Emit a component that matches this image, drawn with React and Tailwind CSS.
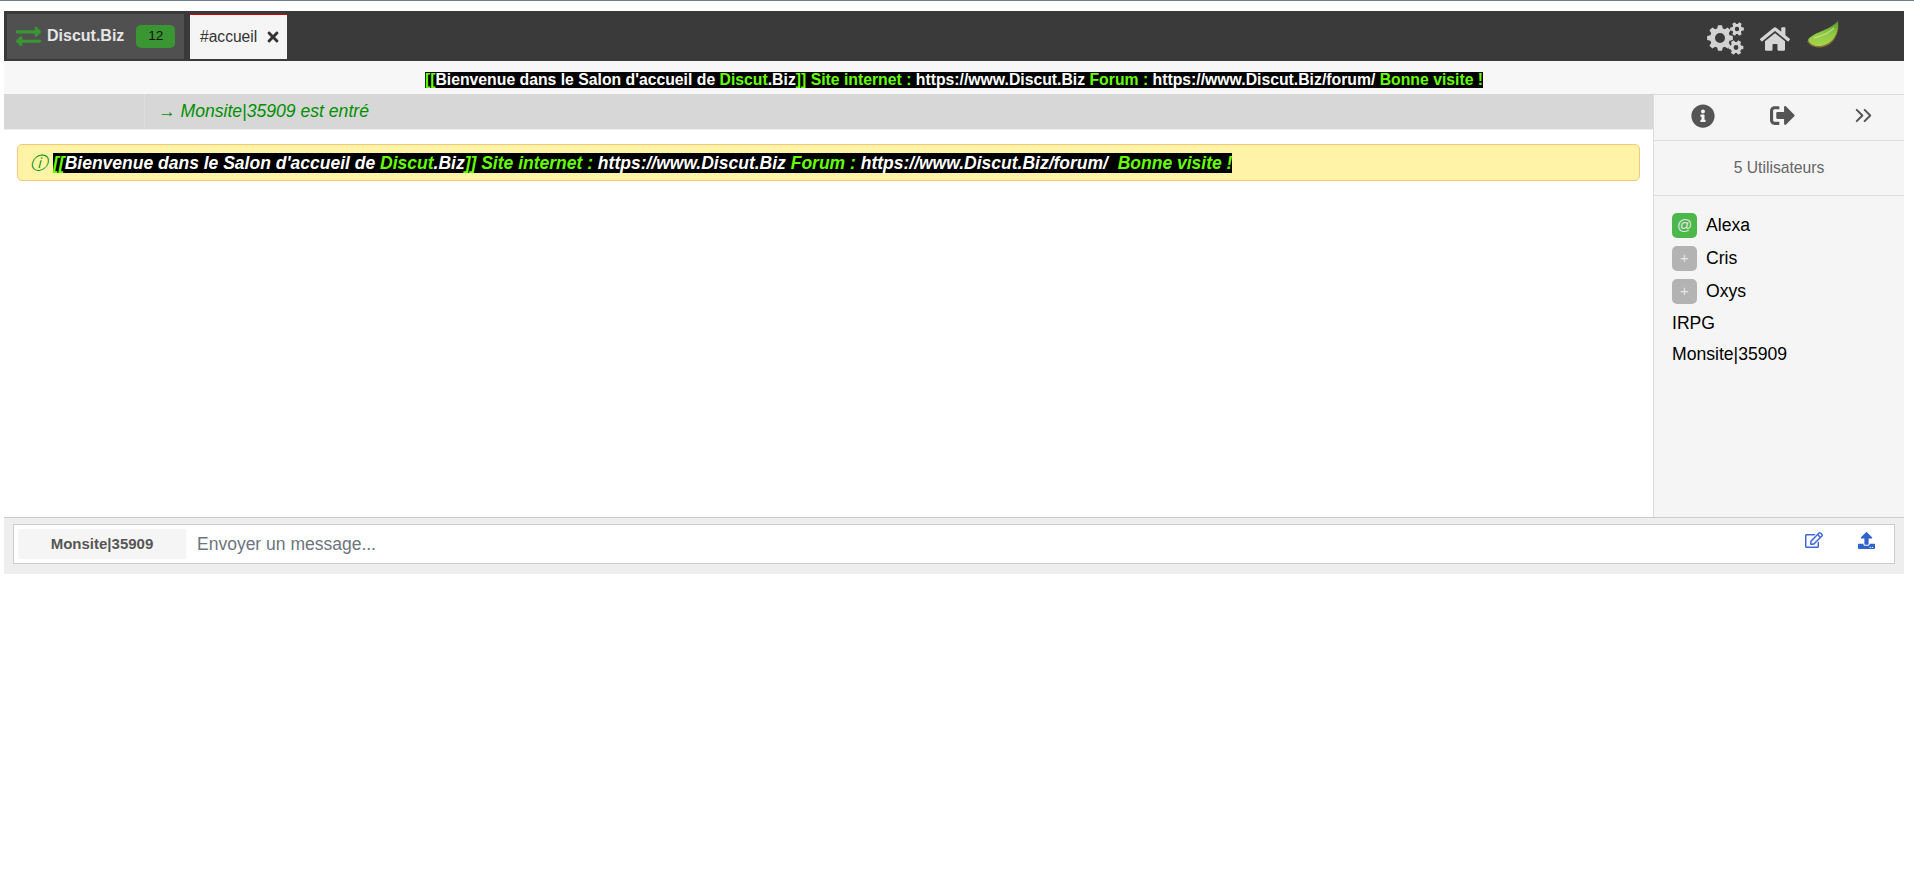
import React from "react";
import {
  FaExchangeAlt,
  FaTimes,
  FaHome,
  FaInfoCircle,
  FaSignOutAlt,
  FaRegEdit,
  FaUpload,
} from "react-icons/fa";
import { ChevronsRight } from "lucide-react";

const USERS = [
  { name: "Alexa", badge: "@", color: "bg-[#4cb84c]" },
  { name: "Cris", badge: "+", color: "bg-[#b3b3b3]" },
  { name: "Oxys", badge: "+", color: "bg-[#b3b3b3]" },
  { name: "IRPG" },
  { name: "Monsite|35909" },
];

function Topic({ wide }) {
  const lime = "text-[#66ff00]";
  return (
    <span className="bg-black text-white font-bold whitespace-pre">
      <span className={lime}>[[</span>
      Bienvenue dans le Salon d'accueil de <span className={lime}>Discut</span>
      .Biz<span className={lime}>]] Site internet : </span>
      https://www.Discut.Biz <span className={lime}>Forum : </span>
      https://www.Discut.Biz/forum/{" "}
      <span className={lime}>{wide ? " Bonne visite !" : "Bonne visite !"}</span>
    </span>
  );
}

// outline of one gear, with its hole, for the settings icon
function gearPath(cx, cy, outer, inner, hole, teeth) {
  const step = (Math.PI * 2) / teeth;
  let d = "";
  for (let i = 0; i < teeth; i++) {
    const a = i * step;
    const pts = [
      [inner, a - step * 0.36],
      [outer, a - step * 0.2],
      [outer, a + step * 0.2],
      [inner, a + step * 0.36],
    ];
    pts.forEach(([r, t], j) => {
      const x = (cx + r * Math.cos(t)).toFixed(2);
      const y = (cy + r * Math.sin(t)).toFixed(2);
      d += `${i === 0 && j === 0 ? "M" : "L"}${x} ${y} `;
    });
  }
  d += `Z M${cx - hole} ${cy} a${hole} ${hole} 0 1 0 ${hole * 2} 0 a${hole} ${hole} 0 1 0 ${-hole * 2} 0 Z`;
  return d;
}

function Gears() {
  return (
    <svg width="37" height="33" viewBox="0 0 37 33" fill="#d2d2d2" fillRule="evenodd">
      <path d={gearPath(13, 16, 13, 10, 5, 8)} />
      <path d={gearPath(30, 7, 7, 5, 2.2, 6)} />
      <path d={gearPath(29, 25.5, 7.5, 5.5, 2.4, 6)} />
    </svg>
  );
}

function Kiwi() {
  return (
    <svg width="32" height="27" viewBox="0 0 32 27">
      <defs>
        <linearGradient id="kiwi" x1="0" y1="0" x2="0" y2="1">
          <stop offset="0" stopColor="#4e9a2a" />
          <stop offset="0.5" stopColor="#8fc940" />
          <stop offset="1" stopColor="#a6d64f" />
        </linearGradient>
      </defs>
      <path d="M31 0 C33 12 27 25 14 26.5 C7 27 2 24 0 20 C8 20 24 12 31 0 Z" fill="#8a6d35" />
      <path d="M31 0 C32 12 26 23 14 25 C7 25.5 3 23 1 19 C6 11 22 10 31 0 Z" fill="url(#kiwi)" />
      <path d="M7 17 C13 15 20 14 27 7" stroke="#c9e79a" strokeWidth="1.5" fill="none" opacity="0.7" />
    </svg>
  );
}

export default function App() {
  return (
    <div className="min-h-[893px] bg-white font-['Liberation_Sans',Arial,sans-serif] text-black">
      <div className="h-px bg-[#6d7f8b]" />
      <div className="pt-[10px] pl-1 pr-[10px]">
        {/* Top bar */}
        <div className="h-[50px] bg-[#3a3a3a] flex items-center pl-[3px]">
          <div className="w-[177px] h-[45px] bg-[#505050] flex items-center pl-[9px]">
            <FaExchangeAlt className="text-[#3a9632] text-[25px]" />
            <span className="ml-[6px] text-[16px] font-bold text-[#e6e6e6]">Discut.Biz</span>
            <span className="ml-[12px] w-[39px] h-[23px] rounded-[5px] bg-[#3a9632] text-[#111] text-[13.6px] flex items-center justify-center">
              12
            </span>
          </div>
          <div className="ml-[6px] w-[97px] h-[45px] bg-[#f5f5f5] border-t border-[#d00000] flex items-center pl-[10px] text-[15.6px] text-[#333]">
            #accueil
            <FaTimes className="ml-[8px] text-[#333] text-[16px]" />
          </div>
          <div className="ml-auto flex items-center mr-[65px]">
            <div className="mt-[5px]">
              <Gears />
            </div>
            <FaHome className="ml-[16px] mt-[5px] text-[#d6d6d6] text-[30px]" />
            <div className="ml-[17px] mb-[3px]">
              <Kiwi />
            </div>
          </div>
        </div>

        {/* Topic */}
        <div className="h-[33px] bg-[#f7f7f7] flex items-center justify-center pt-[5px] text-[15.77px] leading-4">
          <Topic />
        </div>

        <div className="flex h-[423px]">
          {/* Messages */}
          <div className="flex-1 min-w-0 bg-white">
            <div className="h-[36px] bg-[#d7d7d7] border-b border-[#eeeeee] flex items-center">
              <div className="w-[141px] h-full border-r border-[#dedede]" />
              <span className="pl-[13px] text-[17.6px] italic text-[#008f00]">
                → Monsite|35909 est entré
              </span>
            </div>
            <div className="mx-[13px] mt-[14px] h-[37px] rounded-[5px] bg-[#fff3a8] border border-[#f5c97a] flex items-center pl-3 text-[17.5px] italic leading-5">
              <span className="text-[#008f00] mr-[5px]">ⓘ</span>
              <Topic wide />
            </div>
          </div>

          {/* Users */}
          <div className="w-[251px] bg-[#f5f5f5] border-l border-[#dcdcdc] border-t">
            <div className="h-[46px] flex items-center justify-between pl-[37px] pr-[27px] pb-1 border-b border-[#dcdcdc] text-[#555]">
              <FaInfoCircle className="text-[24px]" />
              <FaSignOutAlt className="text-[25px]" />
              <ChevronsRight size={27} strokeWidth={1.8} />
            </div>
            <div className="h-[55px] flex items-center justify-center border-b border-[#dcdcdc] text-[15.7px] text-[#666]">
              5 Utilisateurs
            </div>
            <ul className="pt-[13px] pl-[18px] text-[17.6px]">
              {USERS.map((u) => (
                <li key={u.name} className={`flex items-center ${u.badge ? "h-[33px]" : "h-[31px]"}`}>
                  {u.badge && (
                    <span
                      className={`w-[25px] h-[25px] mr-[9px] rounded-[5px] ${u.color} text-[#e6e6e6] text-[15px] flex items-center justify-center`}
                    >
                      {u.badge}
                    </span>
                  )}
                  {u.name}
                </li>
              ))}
            </ul>
          </div>
        </div>

        {/* Input */}
        <div className="h-[57px] bg-[#eeeeee] border-t border-[#cccccc] px-[9px] pt-[6px]">
          <div className="h-[40px] bg-white border border-[#cccccc] flex items-center pl-1 pr-[19px]">
            <div className="w-[168px] h-[30px] bg-[#f5f5f5] flex items-center justify-center text-[15px] font-bold text-[#555]">
              Monsite|35909
            </div>
            <span className="ml-[11px] text-[17.5px] text-[#6c757d]">Envoyer un message...</span>
            <FaRegEdit className="ml-auto text-[#3f68d8] text-[18px] mb-2" />
            <FaUpload className="ml-[35px] text-[#2f62cc] text-[17px] mb-2" />
          </div>
        </div>
      </div>
    </div>
  );
}
